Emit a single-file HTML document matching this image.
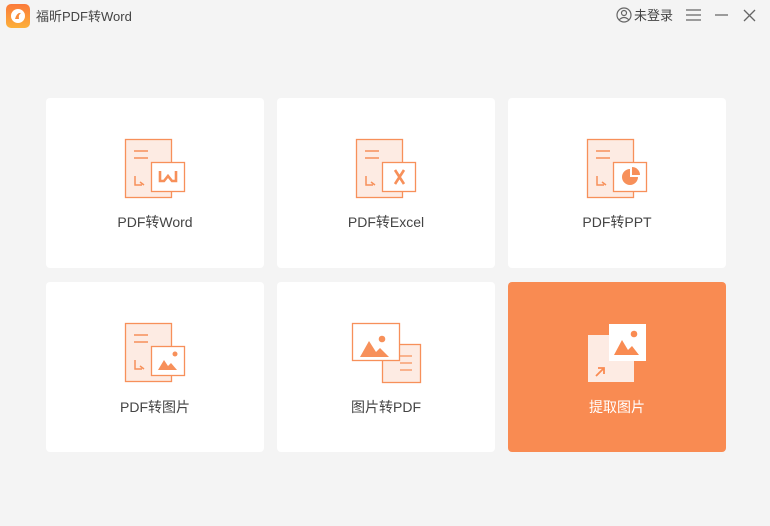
<!DOCTYPE html>
<html><head><meta charset="utf-8"><style>
*{margin:0;padding:0;box-sizing:border-box}
body{width:770px;height:526px;background:#f4f4f4;font-family:"Liberation Sans","Noto Sans CJK SC",sans-serif;position:relative;overflow:hidden}
.card{position:absolute;background:#fff;border-radius:4px;width:218px}
.lbl{position:absolute;left:0;right:0;text-align:center;font-size:14px;color:#444}
svg{position:absolute;left:0;top:0}
</style></head><body>
<div style="position:absolute;left:6px;top:4px;width:24px;height:24px;border-radius:5px;background:linear-gradient(#fb7a3a,#fcb03a)">
<svg width="24" height="24"><circle cx="12" cy="12" r="7" fill="#fff"/><path d="M9 15 Q11 8 15 9 Q12 11 13 15 Z" fill="#f98b3a"/></svg></div>
<div style="position:absolute;left:36px;top:6px;font-size:13px;color:#444">福昕PDF转Word</div>
<svg width="770" height="35" style="position:absolute"><circle cx="624" cy="15" r="7" fill="none" stroke="#666" stroke-width="1.2"/><circle cx="624" cy="13" r="2.5" fill="none" stroke="#666" stroke-width="1.2"/><path d="M619 20 Q624 15 629 20" fill="none" stroke="#666" stroke-width="1.2"/>
<path d="M686 10h15M686 15h15M686 20h15M715 15h13M744 10l11 11M755 10l-11 11" stroke="#666" stroke-width="1.3"/></svg>
<div style="position:absolute;left:634px;top:5px;font-size:13px;color:#444">未登录</div>

<div class="card" style="left:46px;top:98px;height:170px"><div class="lbl" style="top:114px">PDF转Word</div></div>
<div class="card" style="left:277px;top:98px;height:170px"><div class="lbl" style="top:114px">PDF转Excel</div></div>
<div class="card" style="left:508px;top:98px;height:170px"><div class="lbl" style="top:114px">PDF转PPT</div></div>
<div class="card" style="left:46px;top:282px;height:170px"><div class="lbl" style="top:115px">PDF转图片</div></div>
<div class="card" style="left:277px;top:282px;height:170px"><div class="lbl" style="top:115px">图片转PDF</div></div>
<div class="card" style="left:508px;top:282px;height:170px;background:#f98b52"><div class="lbl" style="top:115px;color:#fff">提取图片</div></div>

<svg width="770" height="526" fill="none" stroke="#f7905a" stroke-width="1.3">
<g id="d1">
<rect x="125.5" y="139.5" width="46" height="58" fill="#fdebe3"/>
<path d="M134 151h14M134 158h14M135 176v9h7M140 182l4 3" stroke-width="1.5"/>
</g>
<rect x="151.5" y="162.5" width="33" height="29" fill="#fff"/>
<path d="M160 171v10h4l4-5 4 5h4v-10" stroke-width="2.6"/>

<g transform="translate(231,0)"><use href="#d1"/>
<rect x="151.5" y="162.5" width="33" height="29" fill="#fff"/>
<path d="M164 170l9 14M173 170l-9 14" stroke-width="2.6"/></g>

<g transform="translate(462,0)"><use href="#d1"/>
<rect x="151.5" y="162.5" width="33" height="29" fill="#fff"/>
<path d="M168 169a8 8 0 1 0 8 8h-8z" fill="#f7905a" stroke="none"/><path d="M170 167v8h8a8 8 0 0 0 -8 -8z" fill="#f7905a" stroke="none"/></g>

<g transform="translate(0,184)"><use href="#d1"/>
<rect x="151.5" y="162.5" width="33" height="29" fill="#fff"/>
<path d="M158 186l6-10 4 6 3-3 6 7z" fill="#f7905a" stroke="none"/><circle cx="175" cy="170" r="2.5" fill="#f7905a" stroke="none"/></g>

<rect x="382.5" y="344.5" width="38" height="38" fill="#fdebe3"/>
<path d="M400 356h12M400 363h12M400 370h12"/>
<rect x="352.5" y="323.5" width="47" height="37" fill="#fff"/>
<path d="M360 357l9-16 7 11 4-4 9 9z" fill="#f7905a" stroke="none"/><circle cx="382" cy="339" r="3.3" fill="#f7905a" stroke="none"/>

<rect x="588" y="335" width="46" height="47" fill="#fdebe3" stroke="none"/>
<path d="M596 376l8-8M598 368h6v6" stroke="#f98b52" stroke-width="1.8"/>
<rect x="609" y="324" width="37" height="37" fill="#fff" stroke="none"/>
<path d="M614 355l8-15 6 10 4-4 7 9z" fill="#f98b52" stroke="none"/><circle cx="634" cy="334" r="3.3" fill="#f98b52" stroke="none"/>
</svg>
</body></html>
